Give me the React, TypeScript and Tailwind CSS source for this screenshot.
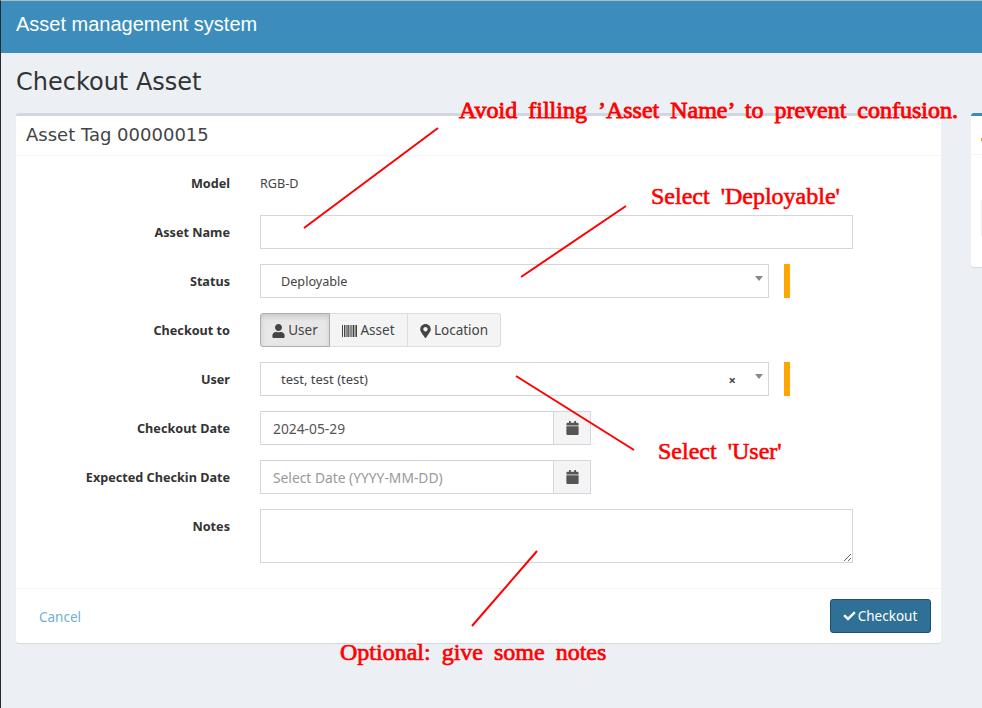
import React from "react";
import { FaUser, FaMapMarkerAlt, FaCalendar, FaCheck } from "react-icons/fa";

const Label = ({ children }: { children: React.ReactNode }) => (
  <div className="w-[214px] shrink-0 text-right text-[12.65px] font-bold leading-[34px] text-[#333]">{children}</div>
);

const Row = ({ label, children, className = "h-[34px]" }: { label: string; children: React.ReactNode; className?: string }) => (
  <div className={`flex mb-[15px] ${className}`}>
    <Label>{label}</Label>
    <div className="ml-[30px] flex-1 flex items-start">{children}</div>
  </div>
);

const Select = ({ value, clear, size = "text-[12.65px]" }: { value: string; clear?: boolean; size?: string }) => (
  <>
    <div className={`relative w-[509px] h-[34px] border border-[#d2d6de] bg-white pl-[20px] leading-[32px] text-[#444] ${size}`}>
      {value}
      {clear && <span className="absolute right-[32px] top-[1px] text-[13px] font-bold text-[#444]">×</span>}
      <span className="absolute right-[5px] top-[11px] border-x-[4px] border-t-[5px] border-x-transparent border-t-[#888]" />
    </div>
    <div className="ml-[15px] w-[6px] h-[34px] bg-[#ffa500]" />
  </>
);

const DateInput = ({ value, placeholder }: { value?: string; placeholder?: string }) => (
  <div className="flex w-[331px] h-[34px]">
    <div className={`flex-1 border border-[#d2d6de] bg-white pl-[12px] text-[13.8px] leading-[33px] ${value ? "text-[#555]" : "text-[#999]"}`}>
      {value ?? placeholder}
    </div>
    <div className="w-[38px] -ml-px border border-[#d2d6de] bg-[#f4f4f4] flex items-center justify-center text-[#555]">
      <FaCalendar className="w-[13px] h-[14px]" />
    </div>
  </div>
);

const Barcode = () => (
  <svg width="15" height="12" viewBox="0 0 15 12" fill="#444" className="shrink-0">
    <rect x="0" y="0" width="1" height="12" />
    <rect x="2" y="0" width="1" height="12" />
    <rect x="3.6" y="0" width="1" height="12" />
    <rect x="5.4" y="0" width="1.4" height="12" />
    <rect x="7.6" y="0" width="1" height="12" />
    <rect x="9.4" y="0" width="1" height="12" />
    <rect x="11" y="0" width="1.4" height="12" />
    <rect x="13.4" y="0" width="1.6" height="12" />
  </svg>
);

const Note = ({ className, children }: { className: string; children: React.ReactNode }) => (
  <div className={`absolute whitespace-nowrap text-[#f00] text-[24px] leading-[28px] [font-family:'Liberation_Serif',serif] [word-spacing:5px] ${className}`}>
    {children}
  </div>
);

export default function App() {
  return (
    <div className="relative w-[982px] h-[708px] overflow-hidden bg-[#ecf0f5] border-l border-t border-l-[#222d32] border-t-[#b8b8b8] [font-family:'Noto_Sans',sans-serif]">
      <header className="h-[52px] bg-[#3c8dbc] pl-[15px] text-[20px] leading-[47px] text-white [font-family:'Liberation_Sans',sans-serif]">
        Asset management system
      </header>

      <main className="pl-[15px]">
        <h1 className="pt-[13px] h-[60px] text-[24px] leading-[32px] text-[#333] [font-family:'DejaVu_Sans',sans-serif]">Checkout Asset</h1>

        <div className="flex items-start">
          <section className="w-[925px] h-[530px] shrink-0 bg-white rounded-[3px] border-t-[3px] border-t-[#d2d6de] shadow-[0_1px_1px_rgba(0,0,0,0.1)] flex flex-col">
            <div className="h-[39px] pl-[10px] text-[18px] leading-[37px] text-[#444] border-b border-[#f4f4f4] [font-family:'DejaVu_Sans',sans-serif] box-content">
              Asset Tag 00000015
            </div>
            <div className="pt-[10px] flex-1 text-[#444]">
              <Row label="Model">
                <span className="text-[12.65px] leading-[34px] text-[#444]">RGB-D</span>
              </Row>
              <Row label="Asset Name">
                <div className="w-[593px] h-[34px] border border-[#d2d6de] bg-white" />
              </Row>
              <Row label="Status">
                <Select value="Deployable" />
              </Row>
              <Row label="Checkout to">
                <div className="flex h-[34px] text-[13.5px] text-[#444]">
                  <div className="w-[70px] pt-px flex items-center justify-center gap-[3px] bg-[#e7e7e7] border border-[#adadad] rounded-l-[3px] shadow-[inset_0_3px_5px_rgba(0,0,0,0.125)]">
                    <FaUser className="w-[13px] h-[14px]" /> User
                  </div>
                  <div className="w-[78px] pt-px flex items-center justify-center gap-[3px] bg-[#f4f4f4] border border-l-0 border-[#ddd]">
                    <Barcode /> Asset
                  </div>
                  <div className="w-[93px] pt-px flex items-center justify-center gap-[3px] bg-[#f4f4f4] border border-l-0 border-[#ddd] rounded-r-[3px]">
                    <FaMapMarkerAlt className="w-[11px] h-[14px]" /> Location
                  </div>
                </div>
              </Row>
              <Row label="User">
                <Select value="test, test (test)" clear size="text-[13px]" />
              </Row>
              <Row label="Checkout Date">
                <DateInput value="2024-05-29" />
              </Row>
              <Row label="Expected Checkin Date">
                <DateInput placeholder="Select Date (YYYY-MM-DD)" />
              </Row>
              <Row label="Notes" className="h-[54px]">
                <textarea readOnly className="w-[593px] h-[54px] border border-[#d2d6de] bg-white" />
              </Row>
            </div>
            <div className="h-[55px] border-t border-[#f4f4f4] flex items-start justify-between pt-[10px] pl-[23px] pr-[10px]">
              <span className="text-[13.5px] leading-[36px] text-[#72afd2]">Cancel</span>
              <div className="w-[101px] h-[34px] border border-[#204d74] rounded-[3px] bg-[#2f7096] text-white text-[13.5px] flex items-center justify-center gap-[2px] pr-[1px]">
                <FaCheck className="w-[13px] h-[12px]" /> Checkout
              </div>
            </div>
          </section>

          <aside className="ml-[30px] w-[40px] h-[154px] shrink-0 bg-white rounded-[3px] border-t-[3px] border-t-[#3c8dbc] shadow-[0_1px_1px_rgba(0,0,0,0.1)]">
            <div className="h-[39px] border-b border-[#f4f4f4] pl-[10px] pt-[22px]">
              <div className="w-[1px] h-[3px] bg-[#e8a33d]" />
            </div>
            <div className="mt-[45px] ml-[10px] h-[36px] border-l border-[#eeeeee]" />
          </aside>
        </div>
      </main>

      <svg className="absolute left-[-1px] top-[-1px] pointer-events-none" width="982" height="708" fill="none" stroke="#f00" strokeWidth="2">
        <line x1="438" y1="128" x2="304" y2="228" />
        <line x1="626" y1="206" x2="521" y2="277" />
        <line x1="516" y1="376" x2="634" y2="450" />
        <line x1="537" y1="551" x2="472" y2="626" />
      </svg>

      <Note className="left-[458px] top-[95px] [-webkit-text-stroke:0.8px_#f00]">Avoid filling ’Asset Name’ to prevent confusion.</Note>
      <Note className="left-[650px] top-[181px] [-webkit-text-stroke:0.6px_#f00]">Select 'Deployable'</Note>
      <Note className="left-[657px] top-[436px] [-webkit-text-stroke:0.6px_#f00]">Select 'User'</Note>
      <Note className="left-[339px] top-[637px] [-webkit-text-stroke:0.7px_#f00]">Optional: give some notes</Note>
    </div>
  );
}
